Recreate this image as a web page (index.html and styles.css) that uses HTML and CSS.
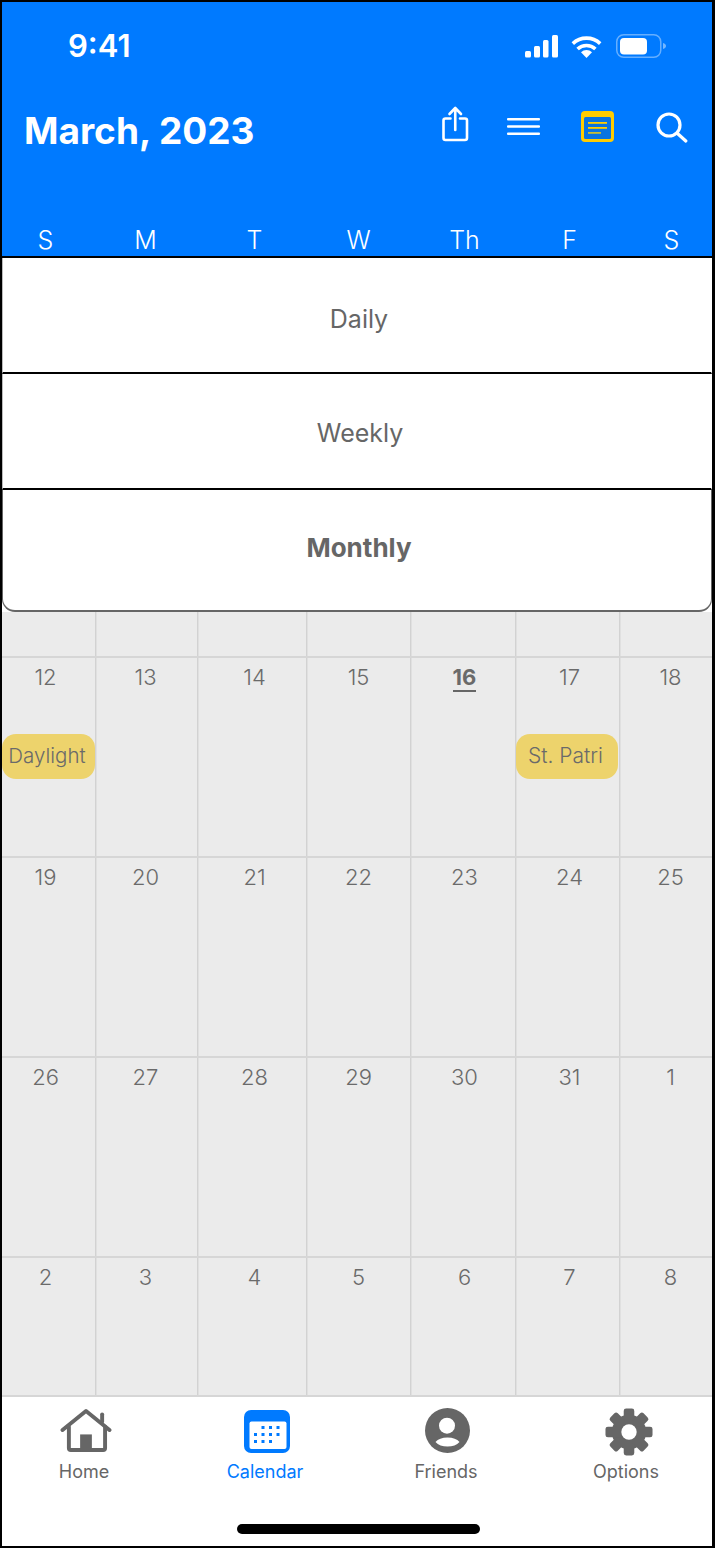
FILE: index.html
```html
<html>
    <head>
        <title>Calendar</title>
        <link rel="stylesheet" href="styles.css">
    </head>
    <body>
        <div id="phone">
            <div id="header">
                <div class="status">
                    <div class="time">9:41</div>
                    <div class="status-icons">
                        <svg class="signal" width="33" height="23" viewBox="0 0 33 23" fill="#fff">
                            <rect x="0" y="16" width="6" height="6.5" rx="1.5"/>
                            <rect x="9" y="11" width="6" height="11.5" rx="1.5"/>
                            <rect x="18" y="5" width="5.5" height="17.5" rx="1.5"/>
                            <rect x="27" y="0" width="6" height="22.5" rx="1.5"/>
                        </svg>
                        <svg width="31" height="23" viewBox="0 0 31 23" fill="none" stroke="#fff" stroke-width="3.6">
                            <path d="M1.8 8.6A20 20 0 0 1 29.2 8.6"/>
                            <path d="M6.6 14A13 13 0 0 1 24.4 14"/>
                            <path d="M15.5 23L10 17.2A8 8 0 0 1 21 17.2Z" fill="#fff" stroke="none"/>
                        </svg>
                        <svg width="50" height="24" viewBox="0 0 50 24">
                            <rect x="0.75" y="0.75" width="44" height="22.5" rx="7" fill="none" stroke="#fff" stroke-opacity="0.4" stroke-width="1.5"/>
                            <rect x="4" y="4" width="27" height="16.5" rx="4" fill="#fff"/>
                            <path d="M47 9c2 .6 3 1.6 3 3s-1 2.4-3 3z" fill="#fff" fill-opacity="0.45"/>
                        </svg>
                    </div>
                </div>
                <div class="title-row">
                    <div class="title">March, 2023</div>
                    <div class="actions">
                        <svg class="share" width="28" height="36" viewBox="0 0 28 36" fill="none" stroke="#fff" stroke-width="2.6" stroke-linecap="round" stroke-linejoin="round">
                            <path d="M8.5 12.5H3.5a2 2 0 0 0-2 2V32a2 2 0 0 0 2 2H23a2 2 0 0 0 2-2V14.5a2 2 0 0 0-2-2H18"/>
                            <path d="M13.25 24V2.5M7.5 8l5.75-6L19 8"/>
                        </svg>
                        <svg class="menu-icon" width="33" height="17" viewBox="0 0 33 17" fill="#fff">
                            <rect width="33" height="2.6" rx="1"/>
                            <rect y="7.2" width="33" height="2.6" rx="1"/>
                            <rect y="14.4" width="33" height="2.6" rx="1"/>
                        </svg>
                        <svg class="note" width="33" height="31" viewBox="0 0 33 31">
                            <rect width="33" height="31" rx="4" fill="#ffcc00"/>
                            <rect x="3" y="6" width="27" height="22" rx="1.5" fill="#0a74e0"/>
                            <rect x="7" y="11" width="19" height="1.8" fill="#ffcc00"/>
                            <rect x="7" y="16" width="19" height="1.8" fill="#ffcc00"/>
                            <rect x="7" y="21" width="13" height="1.8" fill="#c8bd33"/>
                        </svg>
                        <svg class="search" width="32" height="31" viewBox="0 0 32 31" fill="none" stroke="#fff" stroke-width="3.2" stroke-linecap="round">
                            <circle cx="13" cy="13" r="11"/>
                            <path d="M21.5 21.5L29.8 29"/>
                        </svg>
                    </div>
                </div>
                <div class="cal-row weekdays">
                    <div>S</div><div>M</div><div>T</div><div>W</div><div>Th</div><div>F</div><div>S</div>
                </div>
            </div>

            <div id="views">
                <div class="view daily">Daily</div>
                <div class="view weekly">Weekly</div>
                <div class="view selected">Monthly</div>
            </div>

            <div id="calendar">
                <div class="cal-row week stub">
                    <div></div><div></div><div></div><div></div><div></div><div></div><div></div>
                </div>
                <div class="cal-row week">
                    <div>12<span class="event">Daylight</span></div>
                    <div>13</div>
                    <div>14</div>
                    <div>15</div>
                    <div><b class="today">16</b></div>
                    <div>17<span class="event">St. Patri</span></div>
                    <div>18</div>
                </div>
                <div class="cal-row week">
                    <div>19</div><div>20</div><div>21</div><div>22</div><div>23</div><div>24</div><div>25</div>
                </div>
                <div class="cal-row week">
                    <div>26</div><div>27</div><div>28</div><div>29</div><div>30</div><div>31</div><div>1</div>
                </div>
                <div class="cal-row week last">
                    <div>2</div><div>3</div><div>4</div><div>5</div><div>6</div><div>7</div><div>8</div>
                </div>
            </div>

            <div id="nav">
                <div class="tabs">
                    <div class="tab">
                        <svg class="home" width="52" height="46" viewBox="0 0 52 46" fill="none" stroke="#666" stroke-width="4" stroke-linecap="round" stroke-linejoin="round">
                            <path d="M2 22.5L26 3l24 19.5"/>
                            <path d="M8.5 19V41a2 2 0 0 0 2 2H43.5a2 2 0 0 0 2-2V19"/>
                            <path d="M42.5 6.5V14"/>
                            <rect x="20" y="27" width="12" height="16" fill="#666" stroke="none"/>
                        </svg>
                        <span>Home</span>
                    </div>
                    <div class="tab active">
                        <svg class="cal" width="46" height="43" viewBox="0 0 46 43">
                            <rect width="46" height="43" rx="7" fill="#007aff"/>
                            <rect x="5.5" y="11.5" width="37" height="27.5" rx="2" fill="#fff"/>
                            <g fill="#007aff">
                                <rect x="17.5" y="16" width="3" height="3"/>
                                <rect x="25" y="16" width="3" height="3"/>
                                <rect x="32.5" y="16" width="3" height="3"/>
                                <rect x="10" y="23" width="3" height="3"/>
                                <rect x="17.5" y="23" width="3" height="3"/>
                                <rect x="25" y="23" width="3" height="3"/>
                                <rect x="32.5" y="23" width="3" height="3"/>
                                <rect x="10" y="30" width="3" height="3"/>
                                <rect x="17.5" y="30" width="3" height="3"/>
                                <rect x="25" y="30" width="3" height="3"/>
                            </g>
                        </svg>
                        <span>Calendar</span>
                    </div>
                    <div class="tab">
                        <svg class="friend" width="45" height="45" viewBox="0 0 45 45">
                            <circle cx="22.5" cy="22.5" r="22.5" fill="#666"/>
                            <circle cx="22" cy="17.7" r="8" fill="#fff"/>
                            <path d="M10.5 34C13 31 17 29.5 22.5 29.5S32 31 34.5 34C32 37 27.5 38.5 22.5 38.5S13 37 10.5 34Z" fill="#fff"/>
                        </svg>
                        <span>Friends</span>
                    </div>
                    <div class="tab">
                        <svg class="gear" width="50" height="50" viewBox="0 0 50 50">
                            <g fill="#666">
                                <circle cx="25" cy="25" r="18"/>
                                <rect x="19.5" y="0.5" width="11" height="49" rx="2.5"/>
                                <rect x="19.5" y="0.5" width="11" height="49" rx="2.5" transform="rotate(45 25 25)"/>
                                <rect x="19.5" y="0.5" width="11" height="49" rx="2.5" transform="rotate(90 25 25)"/>
                                <rect x="19.5" y="0.5" width="11" height="49" rx="2.5" transform="rotate(135 25 25)"/>
                            </g>
                            <circle cx="25" cy="25" r="8" fill="#fff"/>
                        </svg>
                        <span class="options">Options</span>
                    </div>
                </div>
                <div class="home-bar"></div>
            </div>
        </div>
    </body>
</html>
```
FILE: styles.css
```css
html, body {
    margin: 0;
    padding: 0;
    background: #000;
}
#phone {
    box-sizing: border-box;
    width: 715px;
    height: 1548px;
    border-style: solid;
    border-color: #000;
    border-width: 2px 3px 2px 2px;
    display: flex;
    flex-direction: column;
    overflow: hidden;
    background: #fff;
    font-family: Inter, "Noto Sans", sans-serif;
}

/* shared by the weekday labels and every week of the month */
.cal-row {
    display: grid;
    grid-template-columns: 94px 102px 109px 104px 105px 104px 92px;
}
.cal-row > div {
    box-sizing: border-box;
    text-align: center;
    border-right: 1px solid transparent;
}
.cal-row > div:nth-child(1) { padding-right: 6px; }
.cal-row > div:nth-child(2) { padding-right: 2px; }
.cal-row > div:nth-child(3) { padding-left: 5px; }
.cal-row > div:nth-child(5) { padding-left: 3px; }
.cal-row > div:nth-child(6) { padding-left: 4px; }
.cal-row > div:nth-child(7) { padding-left: 9px; }

#header {
    flex: none;
    height: 254px;
    background: #007aff;
    color: #fff;
    border-bottom: 2px solid #000;
    display: flex;
    flex-direction: column;
}
.status {
    display: flex;
    justify-content: space-between;
    align-items: center;
    height: 24px;
    padding: 32px 46px 0 66px;
}
.time {
    font-size: 31px;
    font-weight: 600;
    line-height: 24px;
}
.status-icons {
    display: flex;
    align-items: center;
    gap: 14px;
}
.signal { margin-right: -1px; }
.title-row {
    display: flex;
    justify-content: space-between;
    align-items: center;
    margin-top: 49px;
    height: 38px;
    padding: 0 24px 0 22px;
}
.title {
    font-size: 37px;
    font-weight: 700;
    line-height: 38px;
    margin-top: 10px;
}
.actions {
    display: flex;
    align-items: center;
}
.menu-icon { margin-left: 37px; margin-top: 1px; }
.note { margin-left: 41px; margin-top: 1px; }
.search { margin-left: 42px; margin-top: 2px; }
.share { margin-bottom: 5px; }
.weekdays {
    margin-top: auto;
    font-size: 25px;
    font-weight: 300;
    line-height: 30px;
    padding-bottom: 1px;
}
.weekdays > div:last-child {
    padding-left: 11px;
    border-right: none;
}

#views {
    flex: none;
    position: relative;
    z-index: 2;
    background: #fff;
    color: #666;
    font-size: 25px;
    text-align: center;
}
.view {
    height: 114px;
    padding-left: 4px;
    border-left: 1px solid #bbb;
    border-right: 1px solid #fff;
    border-bottom: 2px solid #000;
}
.view.daily {
    line-height: 122px;
}
.view.weekly {
    line-height: 118px;
    padding-left: 6px;
}
.view.selected {
    height: 120px;
    line-height: 116px;
    font-size: 26px;
    font-weight: 700;
    border-left-color: #666;
    border-right-color: #666;
    border-bottom: 2px solid #666;
    border-radius: 0 0 13px 13px;
}

#calendar {
    flex: none;
    margin-top: -14px;
    background: #ebebeb;
    color: #6a6a6a;
    font-size: 22px;
    font-weight: 350;
}
.week {
    height: 200px;
    border-bottom: 2px solid #d6d6d6;
    box-sizing: border-box;
}
.week > div {
    border-right-color: #d2d2d2;
    box-shadow: 1px 0 0 #e0e0e0;
    padding-top: 6px;
    line-height: 26px;
}
.week > div:last-child {
    border-right: none;
    box-shadow: none;
}
.week.stub {
    height: 60px;
}
.week.last {
    height: 139px;
}
.today {
    font-weight: 700;
    border-bottom: 2px solid #666;
}
.event {
    display: block;
    box-sizing: border-box;
    height: 45px;
    line-height: 44px;
    margin-top: 44px;
    padding-right: 3px;
    font-size: 20.5px;
    background: #edd36c;
    border-radius: 14px;
    overflow: hidden;
    white-space: nowrap;
}
.week > div:nth-child(1) .event { margin-right: -6px; }
.week > div:nth-child(6) .event {
    margin: 44px 1px 0 -4px;
    font-size: 21px;
}

#nav {
    flex: 1;
    display: flex;
    flex-direction: column;
}
.tabs {
    display: flex;
    gap: 61px;
    padding: 11px 0 0 22px;
}
.tab {
    width: 120px;
    height: 75px;
    display: flex;
    flex-direction: column;
    align-items: center;
    justify-content: flex-end;
    color: #666;
    font-size: 18px;
    line-height: 22px;
}
.tab svg {
    margin-bottom: 8px;
}
.tab.active {
    color: #007aff;
}
.home { margin-left: 3px; }
.cal { margin-left: 3px; }
.friend { margin-left: 2px; }
.gear { margin-left: 3px; margin-bottom: 5px !important; }
.options { margin-right: 2px; }
.home-bar {
    width: 243px;
    height: 10px;
    margin: 41px 0 0 235px;
    border-radius: 5px;
    background: #000;
}
```
